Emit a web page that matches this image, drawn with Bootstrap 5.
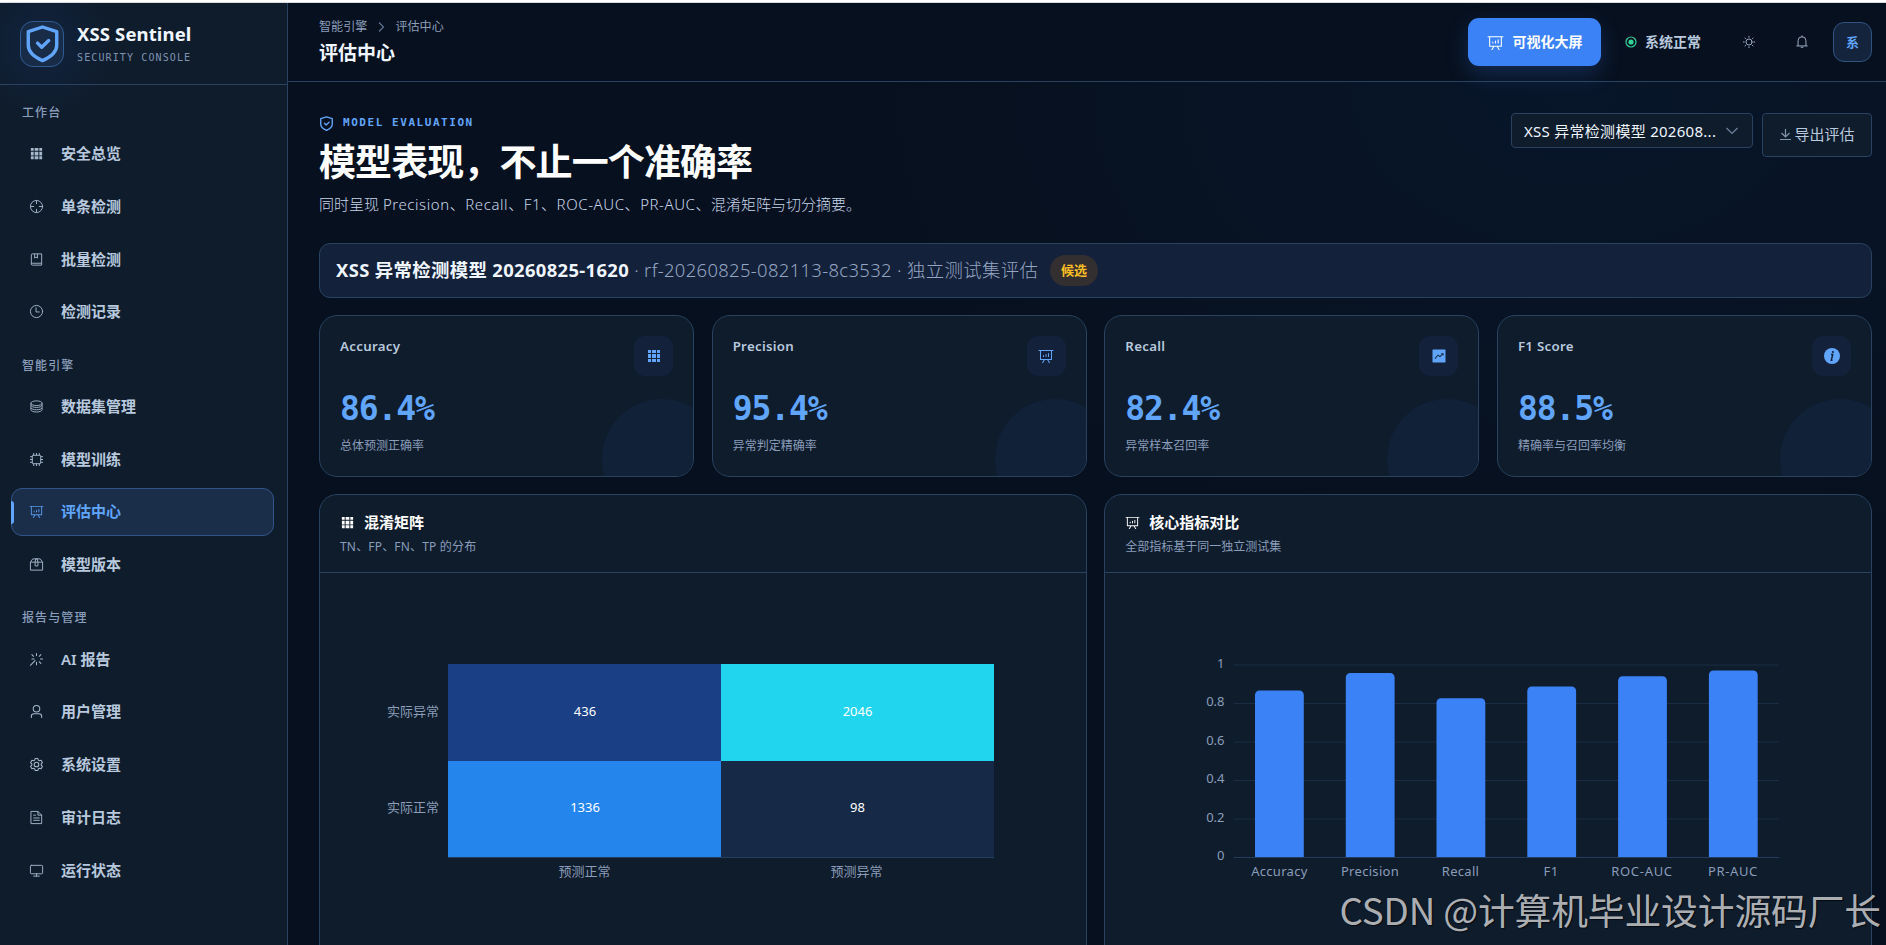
<!DOCTYPE html>
<html lang="zh-CN" data-bs-theme="dark">
<head>
<meta charset="utf-8">
<meta name="viewport" content="width=device-width, initial-scale=1">
<title>评估中心 - XSS Sentinel</title>
<link href="https://cdn.jsdelivr.net/npm/bootstrap@5.3.0/dist/css/bootstrap.min.css" rel="stylesheet">
<style>
:root{--line:#284260;--panel:#0f1c2c;--panel2:#14213a;--text:#f0f6ff;--soft:#b8c9de;--dim:#8a9dba;--accent:#60a5fa}
body{height:945px;overflow:hidden;background:#07101e;color:var(--text);font-family:"Noto Sans","Noto Sans CJK SC",sans-serif;font-size:15px;line-height:1.4;border-top:2px solid #fff}
svg{flex:none}
.ico{width:1em;height:1em;fill:currentColor;display:block}
.mono{font-family:"DejaVu Sans Mono","Noto Sans CJK SC",monospace}
.shell{height:943px;border-top:1px solid #d9dcdf}
.side{width:288px;flex:none;border-right:1px solid var(--line);background:radial-gradient(circle at 42px 42px,#10233f 0,#0f1c2c 70px)}
.brand-row{height:82px;padding:0 0 0 20px;gap:13px;border-bottom:1px solid var(--line)}
.logo-box{width:44px;height:46px;border:1px solid #2f5b93;border-radius:13px;background:#182c48;color:var(--accent)}
.brand-name{font-size:18.5px;font-weight:700;line-height:22px;white-space:nowrap;letter-spacing:.12px}
.brand-sub{font-size:10px;letter-spacing:1.12px;color:#7f93b0;line-height:14px;margin-top:6px;white-space:nowrap}
.side-menu{padding:18px 13px 0 11px}
.side-label{height:20px;line-height:20px;font-size:12px;letter-spacing:1.1px;color:var(--dim);padding-left:11px;font-weight:500;margin-bottom:6.6px}
.menu-set{margin-bottom:19.7px}
.side-link{height:48.4px;margin-bottom:4.3px;border:1px solid transparent;border-radius:11px;padding-left:17px;gap:17px;color:var(--soft);font-weight:600;font-size:15px;position:relative;text-decoration:none}
.side-link .ico{font-size:15px;opacity:.9}
.side-link.on{background:#1a2e4a;border-color:#31558a;color:var(--accent)}
.side-link.on::before{content:"";position:absolute;left:-1px;top:12px;width:3px;height:23px;border-radius:0 3px 3px 0;background:var(--accent)}
.main{min-width:0;background:radial-gradient(ellipse 700px 480px at 1290px 90px,#08162a 0,#07101e00 100%),#07101e}
.top{height:79px;border-bottom:1px solid var(--line);padding:0 14px 0 31px;background:#07101e}
.crumb{font-size:12.1px;color:var(--dim);line-height:18px;gap:8px}
.top-title{font-size:19px;font-weight:700;line-height:26px;margin:4px 0 0}
.screen-btn{width:133px;height:48px;border-radius:11px;border:0;background:#3b82f6;color:#fff;font-size:14px;font-weight:700;gap:9px;box-shadow:0 8px 22px rgba(59,130,246,.24)}
.avatar{width:39px;height:40px;border:1px solid #2f5482;border-radius:11px;background:#14243c;color:var(--accent);font-size:13px;font-weight:600}
.content{padding:31px 14px 0 31px}
.eyebrow{font-size:11px;font-weight:700;letter-spacing:1.55px;color:var(--accent);line-height:16px;gap:9px;margin-top:2px}
.hero h1{font-size:37px;letter-spacing:-.9px;font-weight:700;line-height:48px;margin:7px 0 0}
.hero p{font-size:15px;color:#c6d6ea;line-height:22px;margin:7px 0 0;font-weight:300;white-space:nowrap}
.hero p span{letter-spacing:.57px}
.picker{width:242px;height:35px;border:1px solid var(--line);border-radius:4px;background:var(--panel);font-size:15px;letter-spacing:.28px;padding:1px 13px 0 12px;white-space:nowrap}
.export{width:110px;height:44px;border:1px solid var(--line);border-radius:4px;background:var(--panel);color:var(--soft);font-size:15px;gap:2px;padding-bottom:2px;white-space:nowrap}
.banner{height:55px;border:1px solid var(--line);border-radius:11px;background:var(--panel2);padding:0 16px 1px;margin-top:28px;font-size:18.4px;letter-spacing:.35px;white-space:nowrap}
.banner span{color:#94a6c3;font-weight:300}
.tag{height:31px;width:48px;border-radius:16px;background:#332f31;color:#fbbf24;font-size:13px;font-weight:600;letter-spacing:0}
.kpis{display:grid;grid-template-columns:repeat(4,1fr);gap:17.6px;margin-top:17px}
.kpi{height:162px;border:1px solid var(--line);border-radius:18px;background:var(--panel);padding:20px;position:relative;overflow:hidden}
.kpi::after{content:"";position:absolute;width:120px;height:120px;border-radius:50%;right:-29px;bottom:-43px;background:#102138}
.kpi-name{font-size:13.3px;font-weight:600;color:var(--soft);line-height:20px;letter-spacing:.28px}
.kpi-ico{width:39px;height:40px;border-radius:11px;background:var(--panel2);color:var(--accent);font-size:16px}
.kpi-num{font-size:33px;letter-spacing:-1.1px;font-weight:700;line-height:40px;color:var(--accent);margin-top:13px}
.kpi-note{font-size:12px;color:var(--dim);line-height:18px;margin-top:8px}
.charts{display:grid;grid-template-columns:1fr 1fr;gap:17.6px;margin-top:17px}
.panel{height:470px;border:1px solid var(--line);border-radius:18px;background:var(--panel);overflow:hidden}
.panel-top{height:78px;border-bottom:1px solid var(--line);padding:16px 20px 0}
.panel-top h2{font-size:15px;font-weight:700;line-height:22px;margin:0;gap:9px}
.panel-top small{font-size:12px;color:var(--dim);line-height:18px;margin-top:5px;display:block}
.axis{font-size:13px;fill:#8b9db9}
.stamp{position:absolute;right:5px;bottom:9px;font-family:"Noto Sans CJK SC",sans-serif;font-size:36.8px;line-height:54px;letter-spacing:-.15px;color:rgba(195,197,200,.9);text-shadow:1px 1px 1px rgba(0,0,0,.6);white-space:nowrap}
</style>
</head>
<body>
<svg class="d-none">
<symbol id="i-grid" viewBox="0 0 1024 1024"><path d="M640 384v256H384V384zm64 0h192v256H704zm-64 512H384V704h256zm64 0V704h192v192zm-64-768v192H384V128zm64 0h192v192H704zM320 384v256H128V384zm0 512H128V704h192zm0-768v192H128V128z"/></symbol>
<symbol id="i-aim" viewBox="0 0 1024 1024"><g fill="none" stroke="currentColor" stroke-width="64" stroke-linecap="round"><circle cx="512" cy="512" r="416"/><path d="M512 128v192M512 704v192M128 512h192M704 512h192"/></g></symbol>
<symbol id="i-book" viewBox="0 0 1024 1024"><path fill="none" stroke="currentColor" stroke-width="64" d="M864 768V128H224a64 64 0 0 0-64 64v640a64 64 0 0 0 64 64h640V768H224a64 64 0 0 0-64 64M384 128v288l96-76 96 76V128"/></symbol>
<symbol id="i-clock" viewBox="0 0 1024 1024"><g fill="none" stroke="currentColor" stroke-width="64" stroke-linecap="round"><circle cx="512" cy="512" r="416"/><path d="M480 256v288h224"/></g></symbol>
<symbol id="i-coin" viewBox="0 0 1024 1024"><g fill="none" stroke="currentColor" stroke-width="64"><ellipse cx="512" cy="288" rx="384" ry="160"/><path d="M128 288v128c0 90 172 160 384 160s384-70 384-160V288M128 448v128c0 90 172 160 384 160s384-70 384-160V448M128 600v128c0 90 172 160 384 160s384-70 384-160V600"/></g></symbol>
<symbol id="i-cpu" viewBox="0 0 1024 1024"><path fill="none" stroke="currentColor" stroke-width="64" stroke-linecap="round" d="M288 224h448a64 64 0 0 1 64 64v448a64 64 0 0 1-64 64H288a64 64 0 0 1-64-64V288a64 64 0 0 1 64-64zM512 96v128M320 96v128M704 96v128M512 800v128M320 800v128M704 800v128M96 512h128M96 320h128M96 704h128M800 512h128M800 320h128M800 704h128"/></symbol>
<symbol id="i-data" viewBox="0 0 1024 1024"><path d="m665.216 768 110.848 192h-73.856L591.36 768H433.024L322.176 960H248.32l110.848-192H160a32 32 0 0 1-32-32V192H64a32 32 0 0 1 0-64h896a32 32 0 1 1 0 64h-64v544a32 32 0 0 1-32 32zM832 192H192v512h640zM352 448a32 32 0 0 1 32 32v64a32 32 0 0 1-64 0v-64a32 32 0 0 1 32-32m160-64a32 32 0 0 1 32 32v128a32 32 0 0 1-64 0V416a32 32 0 0 1 32-32m160-64a32 32 0 0 1 32 32v192a32 32 0 1 1-64 0V352a32 32 0 0 1 32-32"/></symbol>
<symbol id="i-box" viewBox="0 0 1024 1024"><path fill="none" stroke="currentColor" stroke-width="64" stroke-linejoin="round" d="M96 352 256 128h512l160 224v544H96zM96 352h832M416 352l40-224h112l40 224v256H416z"/></symbol>
<symbol id="i-magic" viewBox="0 0 1024 1024"><path fill="none" stroke="currentColor" stroke-width="72" stroke-linecap="round" d="M512 96v150M512 700v170M780 480h150M200 480h150M700 292l110-110M310 292 200 182M700 672l110 110M410 584 96 908"/></symbol>
<symbol id="i-user" viewBox="0 0 1024 1024"><path fill="none" stroke="currentColor" stroke-width="72" stroke-linecap="round" d="M512 96a224 224 0 1 1 0 448 224 224 0 0 1 0-448zM160 928v-96c0-106 86-160 192-160h320c106 0 192 54 192 160v96"/></symbol>
<symbol id="i-gear" viewBox="0 0 1024 1024"><g fill="none" stroke="currentColor" stroke-width="72" stroke-linejoin="round"><circle cx="512" cy="512" r="160"/><path d="M424 96h176l36 116 72 42 118-27 88 152-82 90v86l82 90-88 152-118-27-72 42-36 116H424l-36-116-72-42-118 27-88-152 82-90v-86l-82-90 88-152 118 27 72-42z"/></g></symbol>
<symbol id="i-doc" viewBox="0 0 1024 1024"><path fill="none" stroke="currentColor" stroke-width="64" stroke-linecap="round" d="M160 96h448l256 256v576H160zM608 96v256h256M320 352h128M320 544h384M320 704h384"/></symbol>
<symbol id="i-screen" viewBox="0 0 1024 1024"><path fill="none" stroke="currentColor" stroke-width="64" stroke-linecap="round" d="M160 160h704a64 64 0 0 1 64 64v448a64 64 0 0 1-64 64H160a64 64 0 0 1-64-64V224a64 64 0 0 1 64-64zM512 736v160M320 896h384"/></symbol>
<symbol id="i-sun" viewBox="0 0 1024 1024"><g fill="none" stroke="currentColor" stroke-width="72" stroke-linecap="round"><circle cx="512" cy="512" r="224"/><path d="M512 96v64M512 864v64M96 512h64M864 512h64M218 218l45 45M761 761l45 45M218 806l45-45M761 263l45-45"/></g></symbol>
<symbol id="i-bell" viewBox="0 0 1024 1024"><path fill="none" stroke="currentColor" stroke-width="72" stroke-linecap="round" d="M512 64v64M224 768V416a288 288 0 0 1 576 0v352M128 800h768M448 896h128"/></symbol>
<symbol id="i-trend" viewBox="0 0 1024 1024"><path fill-rule="evenodd" d="M128 96a32 32 0 0 0-32 32v768a32 32 0 0 0 32 32h768a32 32 0 0 0 32-32V128a32 32 0 0 0-32-32zM660 330h142v142h-56v-52L580 596 448 500 270 710l-50-42 220-258 132 96 126-120h-38z"/></symbol>
<symbol id="i-shield" viewBox="0 0 32 36"><path fill="none" stroke="currentColor" stroke-width="3.3" stroke-linejoin="round" stroke-linecap="round" d="M16 2 29.8 6.4v13.2c0 6.2-4.6 10.8-13.8 15C6.800 30.400 2.200 25.800 2.200 19.600V6.400z"/><path fill="none" stroke="currentColor" stroke-width="3.300" stroke-linecap="round" stroke-linejoin="round" d="m11.200 17.600 4 4 6.800-6.400"/></symbol>
</svg>

<div class="shell d-flex">
<aside class="side">
  <div class="brand-row d-flex align-items-center">
    <div class="logo-box d-flex align-items-center justify-content-center"><svg width="33" height="39"><use href="#i-shield"/></svg></div>
    <div><div class="brand-name">XSS Sentinel</div><div class="brand-sub mono">SECURITY CONSOLE</div></div>
  </div>
  <nav class="side-menu">
    <div class="side-label">工作台</div>
    <div class="menu-set">
      <a class="side-link d-flex align-items-center"><svg class="ico"><use href="#i-grid"/></svg>安全总览</a>
      <a class="side-link d-flex align-items-center"><svg class="ico"><use href="#i-aim"/></svg>单条检测</a>
      <a class="side-link d-flex align-items-center"><svg class="ico"><use href="#i-book"/></svg>批量检测</a>
      <a class="side-link d-flex align-items-center"><svg class="ico"><use href="#i-clock"/></svg>检测记录</a>
    </div>
    <div class="side-label">智能引擎</div>
    <div class="menu-set">
      <a class="side-link d-flex align-items-center"><svg class="ico"><use href="#i-coin"/></svg>数据集管理</a>
      <a class="side-link d-flex align-items-center"><svg class="ico"><use href="#i-cpu"/></svg>模型训练</a>
      <a class="side-link on d-flex align-items-center"><svg class="ico"><use href="#i-data"/></svg>评估中心</a>
      <a class="side-link d-flex align-items-center"><svg class="ico"><use href="#i-box"/></svg>模型版本</a>
    </div>
    <div class="side-label">报告与管理</div>
    <div class="menu-set">
      <a class="side-link d-flex align-items-center"><svg class="ico"><use href="#i-magic"/></svg>AI 报告</a>
      <a class="side-link d-flex align-items-center"><svg class="ico"><use href="#i-user"/></svg>用户管理</a>
      <a class="side-link d-flex align-items-center"><svg class="ico"><use href="#i-gear"/></svg>系统设置</a>
      <a class="side-link d-flex align-items-center"><svg class="ico"><use href="#i-doc"/></svg>审计日志</a>
      <a class="side-link d-flex align-items-center"><svg class="ico"><use href="#i-screen"/></svg>运行状态</a>
    </div>
  </nav>
</aside>

<main class="main flex-grow-1">
  <header class="top d-flex align-items-center justify-content-between">
    <div>
      <div class="crumb d-flex align-items-center"><span>智能引擎</span><svg width="12" height="12" fill="none" stroke="#5f7492" stroke-width="1.200"><path d="m4 1.500 4.500 4.500L4 10.500"/></svg><span>评估中心</span></div>
      <div class="top-title">评估中心</div>
    </div>
    <div class="d-flex align-items-center">
      <button class="screen-btn d-flex align-items-center justify-content-center"><svg class="ico" style="font-size:17px"><use href="#i-data"/></svg>可视化大屏</button>
      <div class="d-flex align-items-center fw-semibold" style="color:var(--soft);font-size:14px;margin-left:24px;gap:8px"><svg width="12" height="12"><circle cx="6" cy="6" r="5" fill="none" stroke="#34d399" stroke-width="1.200"/><circle cx="6" cy="6" r="2.600" fill="#34d399"/></svg>系统正常</div>
      <svg class="ico" style="font-size:14px;color:#9dadc3;margin-left:41px"><use href="#i-sun"/></svg>
      <svg class="ico" style="font-size:14px;color:#9dadc3;margin-left:39px"><use href="#i-bell"/></svg>
      <div class="avatar d-flex align-items-center justify-content-center" style="margin-left:24px">系</div>
    </div>
  </header>

  <div class="content">
    <div class="hero d-flex justify-content-between align-items-start">
      <div>
        <div class="eyebrow mono d-flex align-items-center"><svg width="15" height="15"><use href="#i-shield"/></svg>MODEL EVALUATION</div>
        <h1>模型表现，不止一个准确率</h1>
        <p>同时呈现 <span>Precision、Recall、F1、ROC-AUC、PR-AUC、</span>混淆矩阵与切分摘要。</p>
      </div>
      <div class="d-flex align-items-start" style="gap:9px">
        <div class="picker d-flex align-items-center justify-content-between">XSS 异常检测模型 202608...<svg width="14" height="8" fill="none" stroke="#71849f" stroke-width="1.200"><path d="m1.500 1 5.500 5.500L12.500 1"/></svg></div>
        <div class="export d-flex align-items-center justify-content-center"><svg width="13" height="13" fill="none" stroke="#8495aa" stroke-width="1.200"><path d="M6.500 1v8M2.500 5l4 4 4-4M1 11.500h11"/></svg>导出评估</div>
      </div>
    </div>

    <div class="banner d-flex align-items-center"><b>XSS 异常检测模型 20260825-1620</b><span>&nbsp;· rf-20260825-082113-8c3532 · 独立测试集评估</span><div class="tag d-flex align-items-center justify-content-center" style="margin-left:12px">候选</div></div>

    <section class="kpis">
      <div class="kpi"><div class="d-flex justify-content-between"><div class="kpi-name">Accuracy</div><div class="kpi-ico d-flex align-items-center justify-content-center"><svg class="ico"><use href="#i-grid"/></svg></div></div><div class="kpi-num mono">86.4%</div><div class="kpi-note">总体预测正确率</div></div>
      <div class="kpi"><div class="d-flex justify-content-between"><div class="kpi-name">Precision</div><div class="kpi-ico d-flex align-items-center justify-content-center"><svg class="ico"><use href="#i-data"/></svg></div></div><div class="kpi-num mono">95.4%</div><div class="kpi-note">异常判定精确率</div></div>
      <div class="kpi"><div class="d-flex justify-content-between"><div class="kpi-name">Recall</div><div class="kpi-ico d-flex align-items-center justify-content-center"><svg class="ico"><use href="#i-trend"/></svg></div></div><div class="kpi-num mono">82.4%</div><div class="kpi-note">异常样本召回率</div></div>
      <div class="kpi"><div class="d-flex justify-content-between"><div class="kpi-name">F1 Score</div><div class="kpi-ico d-flex align-items-center justify-content-center"><svg width="16" height="16"><circle cx="8" cy="8" r="8" fill="#60a5fa"/><path d="M7 6.600h1.700L7.300 12.200h1.200" fill="none" stroke="#14213a" stroke-width="1.500"/><circle cx="8.900" cy="4" r="1.100" fill="#14213a"/></svg></div></div><div class="kpi-num mono">88.5%</div><div class="kpi-note">精确率与召回率均衡</div></div>
    </section>

    <section class="charts">
      <div class="panel">
        <div class="panel-top"><h2 class="d-flex align-items-center"><svg class="ico"><use href="#i-grid"/></svg>混淆矩阵</h2><small style="letter-spacing:.18px">TN、FP、FN、TP 的分布</small></div>
        <svg width="766" height="372">
          <rect x="128" y="91" width="273" height="97" fill="#1a3f85"/><rect x="401" y="91" width="273" height="97" fill="#22d5ee"/>
          <rect x="128" y="188" width="273" height="96" fill="#2486ed"/><rect x="401" y="188" width="273" height="96" fill="#162947"/>
          <path d="M128 284.500h546" stroke="#253d5c"/>
          <g font-size="13" fill="#fff" text-anchor="middle"><text x="265" y="143">436</text><text x="537.500" y="143">2046</text><text x="265" y="239">1336</text><text x="537.500" y="239">98</text></g>
          <g class="axis"><text x="119" y="142.500" text-anchor="end">实际异常</text><text x="119" y="238.500" text-anchor="end">实际正常</text><text x="264.500" y="302.500" text-anchor="middle">预测正常</text><text x="536.500" y="302.500" text-anchor="middle">预测异常</text></g>
        </svg>
      </div>
      <div class="panel">
        <div class="panel-top"><h2 class="d-flex align-items-center"><svg class="ico"><use href="#i-data"/></svg>核心指标对比</h2><small>全部指标基于同一独立测试集</small></div>
        <svg width="766" height="372">
          <path d="M129 92h545M129 130.500h545M129 169h545M129 207.500h545M129 246h545" stroke="#1a2d42"/>
          <path d="M129 284.500h545" stroke="#253d5c"/>
          <g fill="#3b82f6">
            <path d="M150 284V122a4.500 4.500 0 0 1 4.500-4.500h39.800a4.500 4.500 0 0 1 4.500 4.500v162z"/>
            <path d="M240.800 284V104.500a4.500 4.500 0 0 1 4.500-4.500h39.800a4.500 4.500 0 0 1 4.500 4.500V284z"/>
            <path d="M331.500 284V129.700a4.500 4.500 0 0 1 4.500-4.500h39.800a4.500 4.500 0 0 1 4.500 4.500V284z"/>
            <path d="M422.300 284V118a4.500 4.500 0 0 1 4.500-4.500h39.800a4.500 4.500 0 0 1 4.500 4.500v166z"/>
            <path d="M513.100 284V107.800a4.500 4.500 0 0 1 4.500-4.500h39.800a4.500 4.500 0 0 1 4.500 4.500V284z"/>
            <path d="M603.900 284V102a4.500 4.500 0 0 1 4.500-4.500h39.800a4.500 4.500 0 0 1 4.500 4.500v182z"/>
          </g>
          <g class="axis" text-anchor="end"><text x="119.500" y="95">1</text><text x="119.500" y="133">0.8</text><text x="119.500" y="172">0.6</text><text x="119.500" y="210">0.4</text><text x="119.500" y="249">0.2</text><text x="119.500" y="287">0</text></g>
          <g class="axis" text-anchor="middle" letter-spacing=".3"><text x="174.400" y="303">Accuracy</text><text x="265" y="303">Precision</text><text x="355.500" y="303">Recall</text><text x="446" y="303">F1</text><text x="537" y="303" letter-spacing=".7">ROC-AUC</text><text x="628" y="303" letter-spacing=".6">PR-AUC</text></g>
        </svg>
      </div>
    </section>
  </div>
</main>
</div>
<div class="stamp">CSDN @计算机毕业设计源码厂长</div>
<script src="https://cdn.jsdelivr.net/npm/bootstrap@5.3.0/dist/js/bootstrap.bundle.min.js"></script>
</body>
</html>
